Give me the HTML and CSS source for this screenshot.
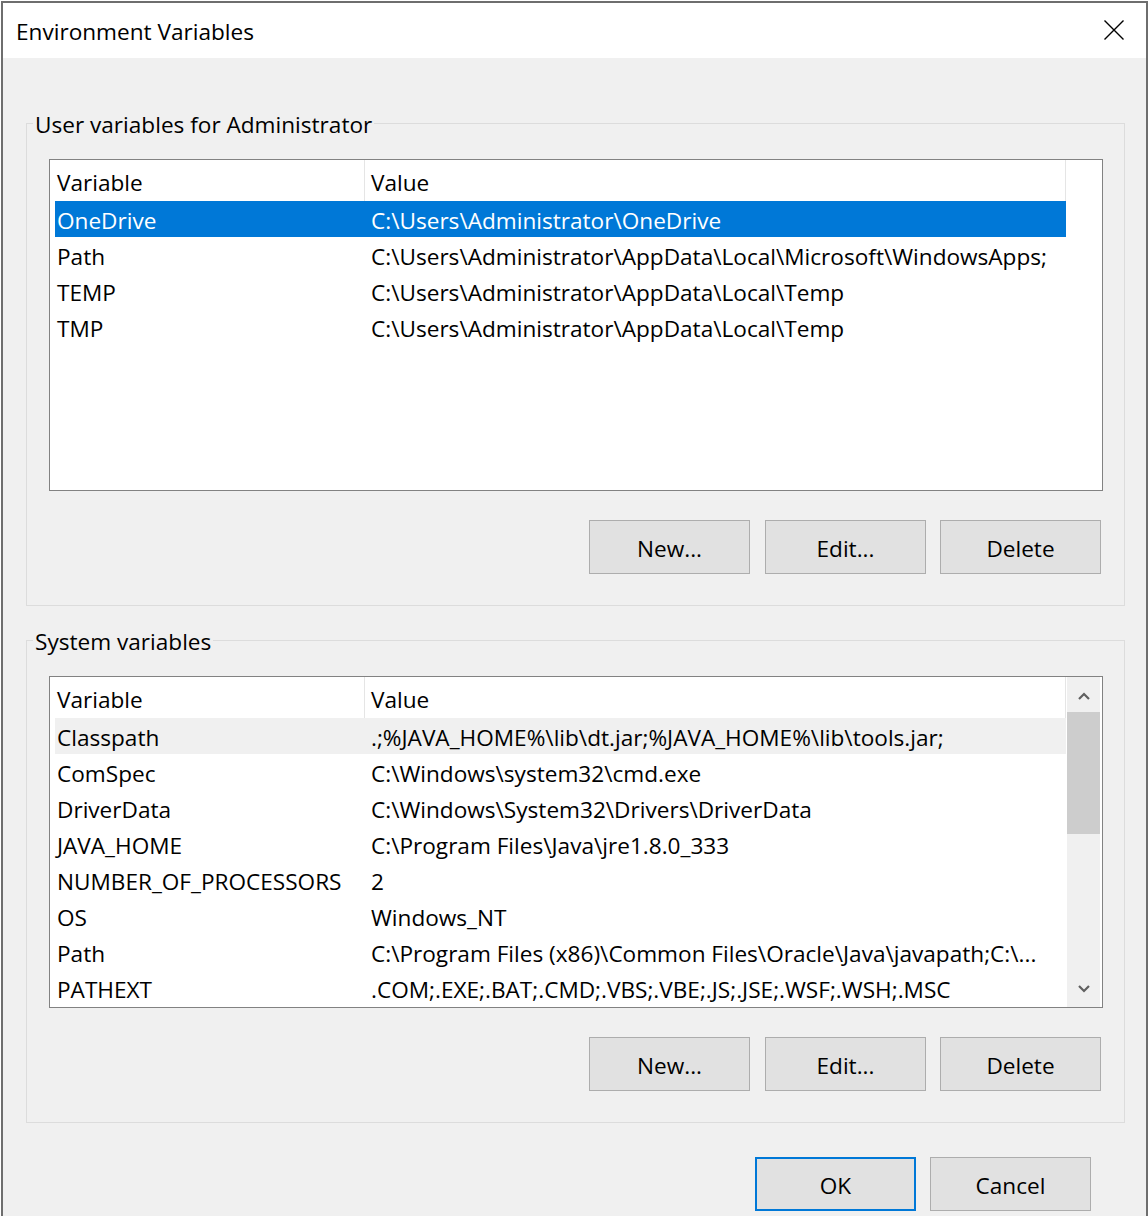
FILE: index.html
```html
<!DOCTYPE html>
<html>
<head>
<meta charset="utf-8">
<title>Environment Variables</title>
<link rel="stylesheet" href="styles.css">
</head>
<body>
<div class="window">
  <div class="titlebar">
    <div class="title">Environment Variables</div>
    <svg class="close" width="20" height="20" viewBox="0 0 20 20"><path d="M0.5 0.5 L19.5 19.5 M19.5 0.5 L0.5 19.5" stroke="#000" stroke-width="1.4" fill="none"/></svg>
  </div>
  <div class="content">
    <div class="group">
      <div class="group-label">User variables for Administrator</div>
      <div class="list">
        <div class="list-main">
          <div class="header">
            <div class="hcell var">Variable</div>
            <div class="hcell val">Value</div>
          </div>
          <div class="rows">
            <div class="row selected"><div class="cell var">OneDrive</div><div class="cell val">C:\Users\Administrator\OneDrive</div></div>
            <div class="row"><div class="cell var">Path</div><div class="cell val">C:\Users\Administrator\AppData\Local\Microsoft\WindowsApps;</div></div>
            <div class="row"><div class="cell var">TEMP</div><div class="cell val">C:\Users\Administrator\AppData\Local\Temp</div></div>
            <div class="row"><div class="cell var">TMP</div><div class="cell val">C:\Users\Administrator\AppData\Local\Temp</div></div>
          </div>
        </div>
      </div>
      <div class="btn-row">
        <div class="btn gap15">New...</div>
        <div class="btn gap14">Edit...</div>
        <div class="btn">Delete</div>
      </div>
    </div>
    <div class="group">
      <div class="group-label">System variables</div>
      <div class="list">
        <div class="list-main">
          <div class="header">
            <div class="hcell var">Variable</div>
            <div class="hcell val">Value</div>
          </div>
          <div class="rows">
            <div class="row hover"><div class="cell var">Classpath</div><div class="cell val">.;%JAVA_HOME%\lib\dt.jar;%JAVA_HOME%\lib\tools.jar;</div></div>
            <div class="row"><div class="cell var">ComSpec</div><div class="cell val">C:\Windows\system32\cmd.exe</div></div>
            <div class="row"><div class="cell var">DriverData</div><div class="cell val">C:\Windows\System32\Drivers\DriverData</div></div>
            <div class="row"><div class="cell var">JAVA_HOME</div><div class="cell val">C:\Program Files\Java\jre1.8.0_333</div></div>
            <div class="row"><div class="cell var">NUMBER_OF_PROCESSORS</div><div class="cell val">2</div></div>
            <div class="row"><div class="cell var">OS</div><div class="cell val">Windows_NT</div></div>
            <div class="row"><div class="cell var">Path</div><div class="cell val">C:\Program Files (x86)\Common Files\Oracle\Java\javapath;C:\...</div></div>
            <div class="row"><div class="cell var">PATHEXT</div><div class="cell val">.COM;.EXE;.BAT;.CMD;.VBS;.VBE;.JS;.JSE;.WSF;.WSH;.MSC</div></div>
          </div>
        </div>
        <div class="scrollbar">
          <div class="sb-btn up"><svg width="12" height="8" viewBox="0 0 12 8"><polyline points="1,7 6,2 11,7" stroke="#606060" stroke-width="2.2" fill="none"/></svg></div>
          <div class="sb-thumb"></div>
          <div class="sb-track"></div>
          <div class="sb-btn down"><svg width="12" height="8" viewBox="0 0 12 8"><polyline points="1,1 6,6 11,1" stroke="#606060" stroke-width="2.2" fill="none"/></svg></div>
        </div>
      </div>
      <div class="btn-row">
        <div class="btn gap15">New...</div>
        <div class="btn gap14">Edit...</div>
        <div class="btn">Delete</div>
      </div>
    </div>
    <div class="footer">
      <div class="btn default gap14">OK</div>
      <div class="btn">Cancel</div>
    </div>
  </div>
</div>
</body>
</html>
```
FILE: styles.css
```css
* { box-sizing: border-box; }
body {
  margin: 0;
  background: #ffffff;
  font-family: "Open Sans", "Noto Sans", sans-serif;
  font-size: 22.6px;
  color: #000;
}
.window {
  margin: 1px 0 0 1px;
  width: 1147px;
  border: 2px solid #6e6e6e;
  border-bottom: none;
  background: #f0f0f0;
}
.titlebar {
  height: 55px;
  background: #fff;
  display: flex;
  justify-content: space-between;
  align-items: flex-start;
  padding: 2px 0 0 13px;
}
.title { line-height: 53px; white-space: nowrap; }
.close { margin: 15px 22px 0 0; }
.content { padding: 65px 21px 10px 23px; }
.group {
  border: 1px solid #dcdcdc;
  padding: 0 21px 31px 22px;
}
.group + .group { margin-top: 34px; }
.group-label {
  width: fit-content;
  margin: -14px 0 0 -16px;
  padding: 1px 2px 0 2px;
  height: 28px;
  line-height: 28px;
  background: #f0f0f0;
  white-space: nowrap;
}
.list {
  margin-top: 21px;
  height: 332px;
  border: 1px solid #828282;
  background: #fff;
  display: flex;
}
.list-main { flex: 1; overflow: hidden; }
.header { display: flex; height: 41px; }
.hcell {
  border-right: 1px solid #e5e5e5;
  padding: 4px 0 0 7px;
  line-height: 37px;
  white-space: nowrap;
}
.hcell.var { width: 315px; }
.hcell.val { width: 701px; padding-left: 6px; }
.rows { padding-left: 5px; }
.row {
  display: flex;
  width: 1011px;
  height: 36px;
  line-height: 36px;
  padding-top: 2px;
  white-space: nowrap;
}
.row.selected { background: #0078d7; color: #fff; }
.row.hover { background: #f0f0f0; }
.cell.var { width: 316px; padding-left: 2px; flex: none; }
.cell.val { flex: 1; overflow: hidden; }
.scrollbar {
  width: 33px;
  margin-right: 2px;
  background: #f0f0f0;
  display: flex;
  flex-direction: column;
}
.sb-btn { height: 35px; display: flex; justify-content: center; }
.sb-btn.up { align-items: flex-start; padding-top: 15px; }
.sb-btn.down { align-items: flex-start; padding-top: 13px; }
.sb-btn svg { display: block; }
.sb-thumb { height: 122px; background: #cdcdcd; }
.sb-track { flex: 1; }
.btn-row {
  display: flex;
  justify-content: flex-end;
  margin-top: 29px;
  padding-right: 2px;
}
.btn {
  width: 161px;
  height: 54px;
  padding-top: 2px;
  background: #e1e1e1;
  border: 1px solid #adadad;
  display: flex;
  align-items: center;
  justify-content: center;
  white-space: nowrap;
}
.btn.gap15 { margin-right: 15px; }
.btn.gap14 { margin-right: 14px; }
.btn.default { border: 2px solid #0078d7; }
.footer {
  display: flex;
  justify-content: flex-end;
  margin-top: 34px;
  padding-right: 34px;
}
```
